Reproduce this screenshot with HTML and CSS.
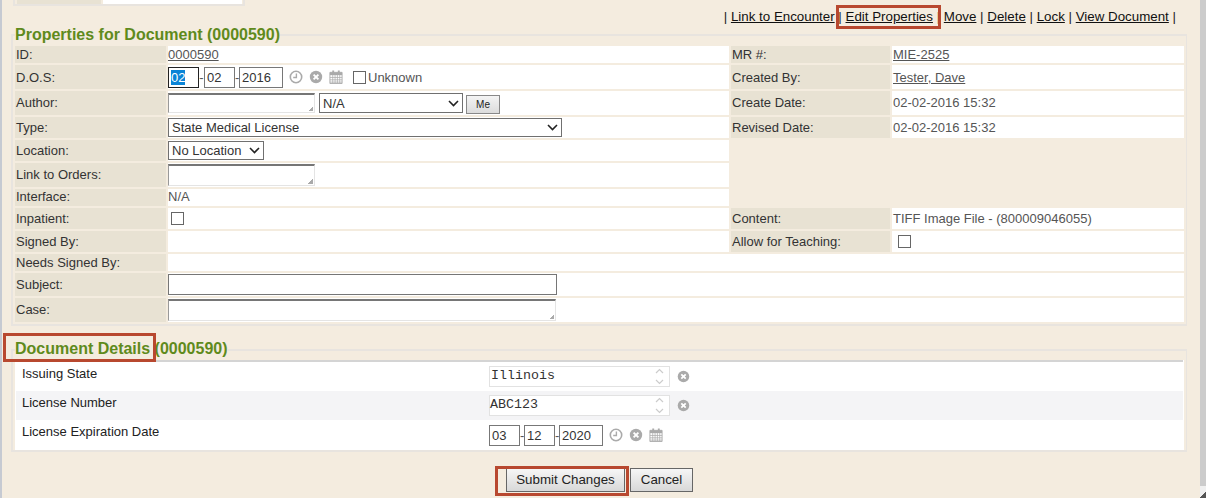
FILE: index.html
```html
<!DOCTYPE html>
<html lang="en">
<head>
<meta charset="utf-8">
<title>Properties for Document</title>
<link rel="stylesheet" href="styles.css">
</head>
<body>
<svg class="defs" width="0" height="0" aria-hidden="true">
  <symbol id="clock" viewBox="0 0 14 14"><circle cx="7" cy="7" r="5.7" fill="none" stroke="currentColor" stroke-width="1.6"/><path d="M7.4 3.5v4H4.2" fill="none" stroke="currentColor" stroke-width="1.4"/></symbol>
  <symbol id="clear" viewBox="0 0 14 14"><circle cx="7" cy="7" r="6.2" fill="currentColor"/><path d="M4.6 4.6l4.8 4.8M9.4 4.6l-4.8 4.8" stroke="#fff" stroke-width="1.9"/></symbol>
  <symbol id="cal" viewBox="0 0 14 15"><path d="M.5 2.5h13v12H.5z" fill="none" stroke="currentColor"/><path d="M.5 2.5h13v3H.5z" fill="currentColor"/><path d="M3 .5h2v3H3zM9 .5h2v3H9z" fill="currentColor"/><path d="M.5 8h13M.5 10.500h13M.5 13h13M3.500 5v9M6 5v9M8.500 5v9M11 5v9" stroke="currentColor" stroke-width=".8" fill="none"/></symbol>
  <symbol id="spin" viewBox="0 0 9 17"><path d="M1 5l3.500-3.500L8 5M1 12l3.500 3.500L8 12" fill="none" stroke="#ccc" stroke-width="1.200"/></symbol>
</svg>
<main class="page">
  <div class="stub"><div class="stub-a"></div><div class="stub-b"></div></div>
  <nav class="toolbar">| <a href="#">Link to Encounter</a> | <a href="#">Edit Properties</a> | <a href="#">Move</a> | <a href="#">Delete</a> | <a href="#">Lock</a> | <a href="#">View Document</a> |</nav>

  <fieldset class="box">
    <legend>Properties for Document (0000590)</legend>
    <table class="props">
      <colgroup><col class="c1"><col class="c2"><col class="c3"><col class="c4"></colgroup>
      <tr class="h17"><th>ID:</th><td><a class="ln" href="#">0000590</a></td><th>MR #:</th><td class="r"><a class="ln" href="#">MIE-2525</a></td></tr>
      <tr class="h24"><th>D.O.S:</th><td>
        <div class="line">
          <span class="date d2 focus"><span class="sel">02</span></span><span class="dash dash-w">-</span><input class="date d2" value="02"><span class="dash">-</span><input class="date d4" value="2016">
          <svg class="ic"><use href="#clock"/></svg><svg class="ic"><use href="#clear"/></svg><svg class="ic"><use href="#cal"/></svg>
          <input type="checkbox" class="chk chk-dos"><span class="unk">Unknown</span>
        </div></td><th>Created By:</th><td class="r"><a class="ln" href="#">Tester, Dave</a></td></tr>
      <tr class="h24 up"><th>Author:</th><td>
        <div class="line">
          <textarea class="ta w147"></textarea>
          <select class="sel-box w144"><option>N/A</option></select>
          <button class="me" type="button">Me</button>
        </div></td><th>Create Date:</th><td class="r">02-02-2016 15:32</td></tr>
      <tr class="h21"><th>Type:</th><td><select class="sel-box slim w394"><option>State Medical License</option></select></td><th>Revised Date:</th><td class="r">02-02-2016 15:32</td></tr>
      <tr class="h21"><th>Location:</th><td><select class="sel-box slim w96"><option>No Location</option></select></td><td class="blank" colspan="2" rowspan="3"></td></tr>
      <tr class="h24 up"><th>Link to Orders:</th><td><textarea class="ta w147"></textarea></td></tr>
      <tr class="h17 up"><th>Interface:</th><td class="r0">N/A</td></tr>
      <tr class="h21"><th>Inpatient:</th><td><input type="checkbox" class="chk chk-in"></td><th>Content:</th><td class="r">TIFF Image File - (800009046055)</td></tr>
      <tr class="h21"><th>Signed By:</th><td></td><th>Allow for Teaching:</th><td class="r"><input type="checkbox" class="chk chk-t"></td></tr>
      <tr class="h17"><th>Needs Signed By:</th><td colspan="3"></td></tr>
      <tr class="h23"><th>Subject:</th><td colspan="3"><input class="subject"></td></tr>
      <tr class="h24 up"><th>Case:</th><td colspan="3"><textarea class="ta w388"></textarea></td></tr>
    </table>
  </fieldset>

  <fieldset class="box box-details">
    <legend>Document Details (0000590)</legend>
    <div class="details">
      <div class="d-rows">
        <div class="d-row"><span class="d-label">Issuing State</span><div class="d-val"><div class="mono"><span>Illinois</span><svg class="spin"><use href="#spin"/></svg></div><svg class="ic ic-x"><use href="#clear"/></svg></div></div>
        <div class="d-row alt"><span class="d-label">License Number</span><div class="d-val"><div class="mono mono-tight"><span>ABC123</span><svg class="spin"><use href="#spin"/></svg></div><svg class="ic ic-x"><use href="#clear"/></svg></div></div>
        <div class="d-row last"><span class="d-label">License Expiration Date</span><div class="d-val">
          <input class="date d2" value="03"><span class="dash">-</span><input class="date d2" value="12"><span class="dash">-</span><input class="date d4" value="2020">
          <svg class="ic"><use href="#clock"/></svg><svg class="ic"><use href="#clear"/></svg><svg class="ic"><use href="#cal"/></svg>
        </div></div>
      </div>
    </div>
  </fieldset>

  <div class="actions">
    <button class="btn btn-submit" type="button">Submit Changes</button>
    <button class="btn btn-cancel" type="button">Cancel</button>
  </div>

  <div class="mark mark-edit"></div>
  <div class="mark mark-details"></div>
  <div class="mark mark-submit"></div>
</main>
<aside class="scroll"><div class="scroll-end"></div></aside>
</body>
</html>
```

FILE: styles.css
```css
* { box-sizing: border-box; }
html, body { height: 498px; margin: 0; overflow: hidden; }
body {
  display: flex;
  background: #f4ecdf;
  border-left: 2px solid #c6cad2;
  font: 13px/15px "Liberation Sans", Arial, sans-serif;
  color: #555;
}
.defs { position: absolute; }
.page { width: 1198px; height: 498px; position: relative; padding-left: 9px; }
.scroll { width: 6px; height: 498px; background: #cccccc; display: flex; align-items: flex-end; }
.scroll-end { width: 6px; height: 12px; background: linear-gradient(135deg, #f0f0f0 62%, #555 62%); }

.stub { display: flex; width: 232px; height: 6px; margin-left: 2px; padding: 0 1px 1px 2px; gap: 2px; border: solid #e8e4df; border-width: 0 2px 2px 2px; }
.stub-a { width: 84px; height: 4px; background: #e8e2d3; }
.stub-b { flex: 1; height: 4px; background: #fff; }

.toolbar { height: 19px; padding: 3px 24px 0 0; text-align: right; font-size: 13.33px; color: #222; white-space: pre-wrap; }
.toolbar a { color: #111; }

.box { width: 1176px; margin: 0; padding: 0; border: solid #e8e4df; border-width: 2px 1px 2px 2px; min-width: 0; }
.box legend { margin-left: 2px; padding: 0; font: bold 16px/20px "Liberation Sans", Arial, sans-serif; color: #5f8a1c; }

.props { width: 100%; table-layout: fixed; border-collapse: separate; border-spacing: 2px; margin-top: -1px; }
.c1 { width: 151px; } .c2 { width: 561px; } .c3 { width: 159px; } .c4 { width: auto; }
.props th, .props td { padding: 0; }
.props th { background: #e8e2d3; font-weight: normal; text-align: left; color: #333; padding-left: 1px; }
.props td { background: #fff; color: #555; }
.props td.blank { background: transparent; }
.props td.r { padding-left: 1px; }
.props tr.up th, .props tr.up td.r, .props tr.up td.r0 { padding-bottom: 2px; }
.h17 { height: 17px; } .h21 { height: 21px; } .h23 { height: 23px; } .h24 { height: 24px; }
.ln { color: #555; }

.line { display: flex; align-items: center; height: 24px; }
.date {
  display: inline-block; height: 21px; padding: 0 2px; margin: 0;
  border: 1px solid #777; background: #fff;
  font: 13px/19px "Liberation Sans", Arial, sans-serif; color: #333; outline: 0; vertical-align: middle;
}
.d2 { width: 31px; } .d4 { width: 44px; }
.focus { border-color: #222; }
.sel { background: #0a84d6; color: #fff; }
.dash { display: inline-block; width: 4px; text-align: center; color: #555; vertical-align: middle; }
.dash-w { width: 5px; }
.ic { width: 14px; height: 14px; margin-left: 6px; color: #aaa; vertical-align: middle; flex: none; }
.chk { appearance: none; width: 13px; height: 13px; margin: 0; background: #fff; border: 1px solid #666; flex: none; vertical-align: middle; }
.chk-dos { margin-left: 10px; }
.unk { margin-left: 2px; color: #555; }
.chk-in { display: block; margin-left: 3px; }
.chk-t { display: block; margin-left: 5px; }

.ta {
  display: block; height: 22px; margin: 0; padding: 0; resize: none; overflow: hidden;
  border: solid; border-width: 2px 1px 1px 1px; border-color: #767676 #e4e4e4 #e4e4e4 #999;
  background: #fff linear-gradient(135deg, transparent 50%, #aaa 50%) no-repeat right 1px bottom 1px / 5px 5px;
  font: 13px "Liberation Sans", Arial, sans-serif;
}
.line .ta { height: 20px; }
.w147 { width: 147px; } .w388 { width: 388px; }
.sel-box {
  display: block; appearance: none; height: 20px; margin: 0; padding: 0 0 0 3px;
  border: 1px solid #707070; border-radius: 0;
  background: #fff url("data:image/svg+xml,%3Csvg xmlns='http://www.w3.org/2000/svg' width='11' height='7'%3E%3Cpath d='M1 1l4.500 4.500L10 1' fill='none' stroke='%23222' stroke-width='1.600'/%3E%3C/svg%3E") no-repeat right 3px center;
  font: 13px "Liberation Sans", Arial, sans-serif; color: #333;
}
.sel-box.slim { height: 19px; }
.w144 { width: 144px; margin-left: 4px; } .w394 { width: 394px; } .w96 { width: 96px; }
.me {
  width: 34px; height: 19px; margin: 2px 0 0 3px; padding: 0;
  border: 1px solid #888; border-radius: 0;
  background: linear-gradient(#f4f4f4, #dcdcdc);
  font: 10px "Liberation Sans", Arial, sans-serif; color: #222;
}
.subject { display: block; width: 389px; height: 21px; margin: 0; border: 1px solid #767676; background: #fff; }

.box-details { margin-top: 14px; }
.box-details legend { line-height: 18px; padding-bottom: 2px; }
.details { margin: 0 2px; padding: 0 1px; background: #fff; height: 90px; }
.d-rows { border-top: 2px solid #d4d4d4; }
.d-row { display: flex; height: 29px; color: #333; }
.d-row.alt { background: #f4f4f6; }
.d-row.last { height: 30px; }
.d-label { width: 473px; padding: 4px 0 0 6px; color: #222; }
.d-val { display: flex; align-items: center; height: 100%; }
.mono {
  display: flex; justify-content: space-between; width: 181px; height: 21px; padding: 0 1px 0 1px;
  border: 1px solid #e2e2e2; background: #fff;
  font: 13.33px/17px "Liberation Mono", "Courier New", monospace; color: #333;
}
.mono-tight { padding-left: 0; }
.spin { width: 9px; height: 17px; margin: 1px 4px 0 0; flex: none; }
.ic-x { width: 13px; height: 13px; margin-left: 7px; }

.actions { display: flex; gap: 5px; margin: 16px 0 0 495px; }
.btn {
  height: 24px; padding: 0 0 2px; border: 1px solid #666; border-radius: 0;
  background: linear-gradient(#f6f6f6, #d8d8d8);
  font: 13.33px "Liberation Sans", Arial, sans-serif; color: #222;
}
.btn-submit { width: 119px; }
.btn-cancel { width: 63px; }

.mark { position: absolute; border: 3px solid #b8482f; pointer-events: none; }
.mark-edit { left: 834px; top: 5px; width: 105px; height: 24px; }
.mark-details { left: 1px; top: 333px; width: 153px; height: 29px; }
.mark-submit { left: 493px; top: 466px; width: 134px; height: 30px; }
```
